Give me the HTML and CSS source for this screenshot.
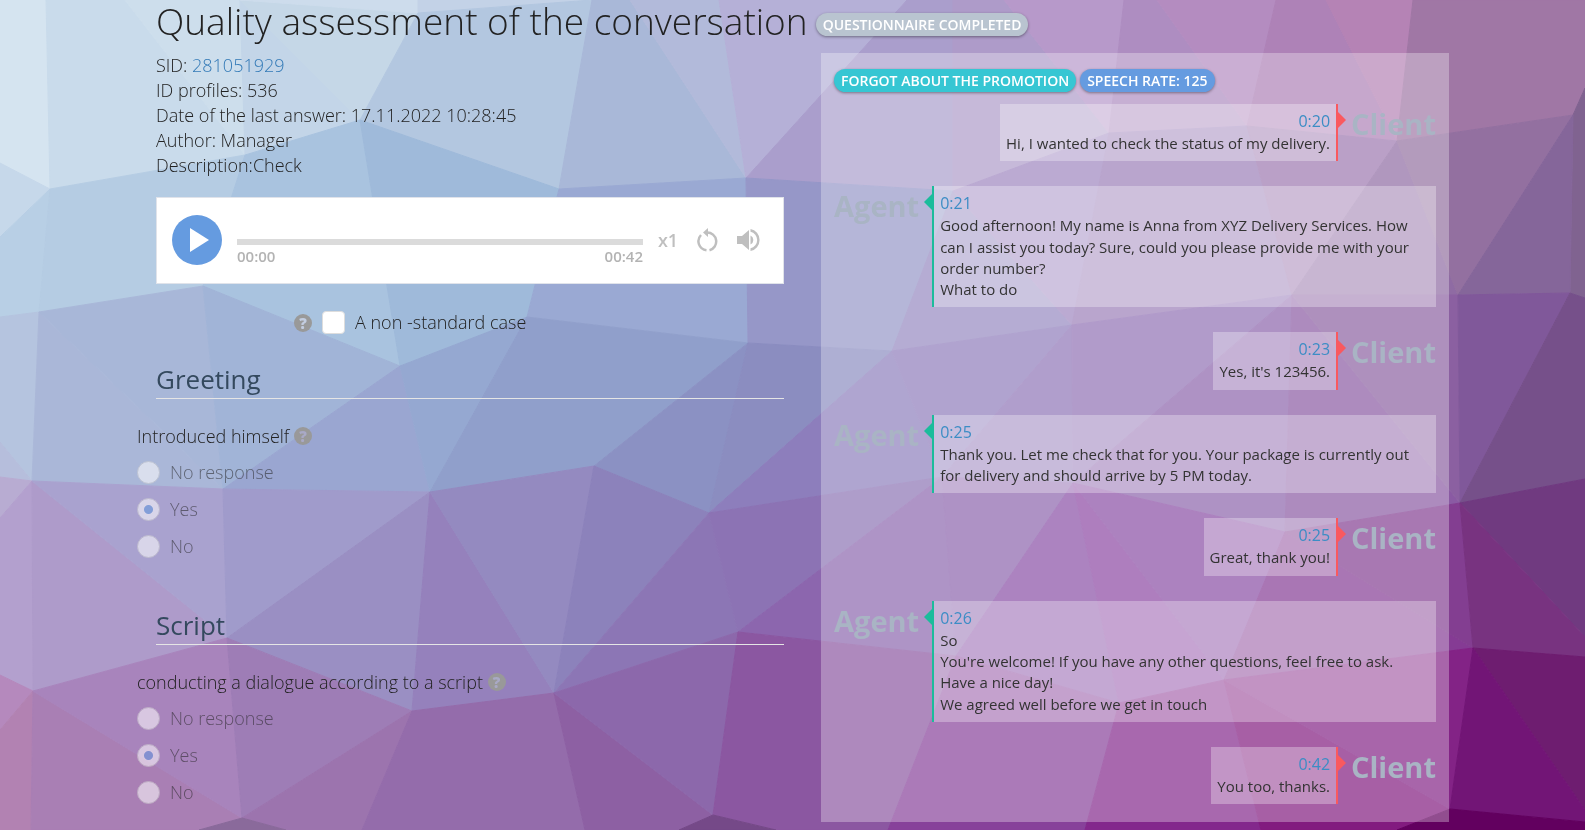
FILE: index.html
```html
<!DOCTYPE html>
<html lang="en">
<head>
    <meta charset="UTF-8">
    <meta name="viewport" content="width=device-width, initial-scale=1.0">
    <title>Quality assessment of the conversation</title>
    <link rel="stylesheet" href="styles.css">
</head>
<body>
    <!-- Low-poly backdrop -->
    <svg class="backdrop" viewBox="0 0 1585 830" preserveAspectRatio="none" aria-hidden="true">
        <polygon color="#d5e4f0" points="0,0 46,0 50,189 0,163"/>
        <polygon color="#c9dbeb" points="46,0 125,0 245,155 50,189"/>
        <polygon color="#cddeec" points="125,0 240,0 245,155"/>
        <polygon color="#c3d5e8" points="240,0 360,120 245,155"/>
        <polygon color="#c5d7e7" points="240,0 418,13 360,120"/>
        <polygon color="#cddcec" points="240,0 418,0 418,13"/>
        <polygon color="#c3d2e7" points="418,0 592,0 418,13"/>
        <polygon color="#b3c7e0" points="418,13 592,0 559,189 360,120"/>
        <polygon color="#a9b8d8" points="592,0 630,0 746,178 559,189"/>
        <polygon color="#b2bada" points="630,0 719,0 746,178"/>
        <polygon color="#b5b0d7" points="719,0 907,0 746,178"/>
        <polygon color="#aa9ecc" points="907,0 953,0 953,191 746,178"/>
        <polygon color="#ae9bc9" points="953,0 1004,0 1109,133 953,191"/>
        <polygon color="#b799ca" points="1004,0 1124,0 1109,133"/>
        <polygon color="#ae8dc1" points="1124,0 1157,0 1247,126 1109,133"/>
        <polygon color="#b48cc0" points="1157,0 1276,0 1247,126"/>
        <polygon color="#ae82b7" points="1276,0 1326,0 1397,141 1247,126"/>
        <polygon color="#b583b5" points="1326,0 1413,0 1397,141"/>
        <polygon color="#a077a5" points="1413,0 1585,0 1585,88 1573,115 1397,141"/>
        <polygon color="#806390" points="1585,88 1585,298 1570,293 1573,115"/>
        <polygon color="#c6d8ea" points="0,163 50,189 0,237"/>
        <polygon color="#b8cfe5" points="0,237 50,189 39,312 0,317"/>
        <polygon color="#b5cce3" points="50,189 245,155 203,286 39,312"/>
        <polygon color="#a9c3df" points="245,155 360,120 400,366 203,286"/>
        <polygon color="#9fbada" points="360,120 559,189 527,317 400,366"/>
        <polygon color="#9aa9d3" points="559,189 746,178 748,343 527,317"/>
        <polygon color="#9697c8" points="746,178 953,191 892,351 748,343"/>
        <polygon color="#9589c0" points="953,191 1072,325 892,351"/>
        <polygon color="#9e86bf" points="953,191 1109,133 1072,325"/>
        <polygon color="#9b7eb8" points="1109,133 1247,126 1292,295 1072,325"/>
        <polygon color="#9d78af" points="1247,126 1397,141 1292,295"/>
        <polygon color="#8f6ba3" points="1397,141 1458,295 1292,295"/>
        <polygon color="#9370a0" points="1397,141 1573,115 1458,295"/>
        <polygon color="#85669a" points="1573,115 1570,293 1458,295"/>
        <polygon color="#b5c4df" points="0,317 39,312 32,481 0,442"/>
        <polygon color="#b6bedc" points="0,442 32,481 0,477"/>
        <polygon color="#aab7d8" points="39,312 223,489 32,481"/>
        <polygon color="#a8b7d8" points="39,312 203,286 223,489"/>
        <polygon color="#a1b4d7" points="203,286 400,366 223,489"/>
        <polygon color="#9aa6d1" points="400,366 430,492 223,489"/>
        <polygon color="#95a8d1" points="400,366 527,317 430,492"/>
        <polygon color="#909fcb" points="527,317 748,343 594,466 430,492"/>
        <polygon color="#8b91c3" points="748,343 709,513 594,466"/>
        <polygon color="#8b8dc0" points="748,343 892,351 709,513"/>
        <polygon color="#8d7ebc" points="892,351 942,477 709,513"/>
        <polygon color="#8f7cbb" points="892,351 1072,325 942,477"/>
        <polygon color="#8f74b6" points="1072,325 1073,483 942,477"/>
        <polygon color="#9070b4" points="1072,325 1292,295 1073,483"/>
        <polygon color="#8c63ab" points="1292,295 1285,532 1073,483"/>
        <polygon color="#8a5aa3" points="1292,295 1460,503 1285,532"/>
        <polygon color="#8b60a1" points="1292,295 1458,295 1460,503"/>
        <polygon color="#80589a" points="1458,295 1570,293 1460,503"/>
        <polygon color="#76508a" points="1570,293 1585,298 1585,479 1460,503"/>
        <polygon color="#b8acd2" points="0,477 32,481 0,518"/>
        <polygon color="#b3a0ce" points="0,518 32,481 33,691 0,675"/>
        <polygon color="#ae9bca" points="32,481 227,638 33,691"/>
        <polygon color="#a9a2cf" points="32,481 223,489 227,638"/>
        <polygon color="#a09bcb" points="223,489 430,492 227,638"/>
        <polygon color="#9a8fc3" points="430,492 412,711 227,638"/>
        <polygon color="#9581bc" points="430,492 554,693 412,711"/>
        <polygon color="#948ac0" points="430,492 594,466 554,693"/>
        <polygon color="#8c82bb" points="594,466 709,513 554,693"/>
        <polygon color="#8c76b5" points="709,513 738,632 554,693"/>
        <polygon color="#8c73b4" points="709,513 942,477 738,632"/>
        <polygon color="#8c66ae" points="942,477 956,656 738,632"/>
        <polygon color="#8b63ac" points="942,477 1073,483 956,656"/>
        <polygon color="#884ea5" points="1073,483 1119,703 956,656"/>
        <polygon color="#8b47a3" points="1073,483 1224,680 1119,703"/>
        <polygon color="#894ca4" points="1073,483 1285,532 1224,680"/>
        <polygon color="#853b94" points="1285,532 1473,648 1224,680"/>
        <polygon color="#833e91" points="1285,532 1460,503 1473,648"/>
        <polygon color="#703a80" points="1460,503 1585,479 1585,637"/>
        <polygon color="#783380" points="1460,503 1585,637 1585,657 1473,648"/>
        <polygon color="#b589bd" points="0,675 33,691 0,730"/>
        <polygon color="#b282b2" points="0,730 33,691 31,830 0,830"/>
        <polygon color="#a97fb4" points="33,691 242,818 199,830 31,830"/>
        <polygon color="#a884bc" points="33,691 227,638 242,818"/>
        <polygon color="#9e7db6" points="227,638 412,711 242,818"/>
        <polygon color="#9c74ae" points="412,711 362,830 286,830 242,818"/>
        <polygon color="#946cab" points="412,711 554,693 585,830 362,830"/>
        <polygon color="#8d60a3" points="554,693 713,815 679,830 585,830"/>
        <polygon color="#8c68ab" points="554,693 738,632 713,815"/>
        <polygon color="#8b57a1" points="738,632 956,656 888,830 776,830 713,815"/>
        <polygon color="#8a6a9b" points="242,818 286,830 199,830"/>
        <polygon color="#754988" points="713,815 776,830 679,830"/>
        <polygon color="#87419a" points="956,656 1119,703 1085,830 888,830"/>
        <polygon color="#83288c" points="1119,703 1224,680 1261,830 1085,830"/>
        <polygon color="#821b7f" points="1224,680 1450,809 1397,830 1261,830"/>
        <polygon color="#832386" points="1224,680 1473,648 1450,809"/>
        <polygon color="#6e1d70" points="1473,648 1585,657 1585,810"/>
        <polygon color="#721576" points="1473,648 1585,810 1585,822 1450,809"/>
        <polygon color="#62005f" points="1450,809 1585,822 1585,830 1397,830"/>
    </svg>

    <div class="page">
        <header class="page-header">
            <h1>Quality assessment of the conversation</h1>
            <span class="badge badge-grey">Questionnaire completed</span>
        </header>

        <div class="columns">
            <main class="survey">
                <div class="info">
                    <div>SID: <a href="#">281051929</a></div>
                    <div>ID profiles: 536</div>
                    <div>Date of the last answer: 17.11.2022 10:28:45</div>
                    <div>Author: Manager</div>
                    <div>Description:Check</div>
                </div>

                <div class="player">
                    <button type="button" class="play" aria-label="Play">
                        <svg width="50" height="50" viewBox="0 0 50 50"><path d="M18 13v24l19-12z" fill="#fff"/></svg>
                    </button>
                    <div class="track">
                        <div class="track-bar"></div>
                        <div class="track-times"><span>00:00</span><span>00:42</span></div>
                    </div>
                    <button type="button" class="player-button speed">x1</button>
                    <button type="button" class="player-button" aria-label="Repeat">
                        <svg width="24" height="26" viewBox="0 0 24 26" fill="none" stroke="#bfbfbf" stroke-width="2.500">
                            <path d="M11 5.500A9 9 0 0 1 13.500 23.200M10.500 23.200A9 9 0 0 1 5 8"/>
                            <path d="M12 1v9L7 5.500z" fill="#bfbfbf" stroke="none"/>
                        </svg>
                    </button>
                    <button type="button" class="player-button" aria-label="Volume">
                        <svg width="24" height="24" viewBox="0 0 24 24" fill="#bfbfbf">
                            <path d="M1 8v8h5l7 6V2L6 8zM14.500 7.500v9a5 5 0 0 0 0-9z"/>
                            <path d="M14.500 1v2.700a8.500 8.500 0 0 1 0 16.600V23a11.200 11.200 0 0 0 0-22z"/>
                        </svg>
                    </button>
                </div>

                <div class="special">
                    <span class="help">?</span>
                    <input type="checkbox" id="special">
                    <label for="special">A non -standard case</label>
                </div>

                <section>
                    <h2>Greeting</h2>
                    <fieldset>
                        <legend>Introduced himself <span class="help">?</span></legend>
                        <label class="option"><input type="radio" name="intro" disabled> No response</label>
                        <label class="option"><input type="radio" name="intro" disabled checked> Yes</label>
                        <label class="option"><input type="radio" name="intro" disabled> No</label>
                    </fieldset>
                </section>

                <section>
                    <h2>Script</h2>
                    <fieldset>
                        <legend>conducting a dialogue according to a script <span class="help">?</span></legend>
                        <label class="option"><input type="radio" name="script" disabled> No response</label>
                        <label class="option"><input type="radio" name="script" disabled checked> Yes</label>
                        <label class="option"><input type="radio" name="script" disabled> No</label>
                    </fieldset>
                </section>
            </main>

            <aside class="dialog">
                <div class="tags">
                    <span class="badge badge-teal">Forgot about the promotion</span>
                    <span class="badge badge-blue">Speech rate: 125</span>
                </div>

                <div class="message client">
                    <div class="who">Client</div>
                    <div class="bubble">
                        <a href="#" class="time">0:20</a>
                        <p>Hi, I wanted to check the status of my delivery.</p>
                    </div>
                </div>
                <div class="message agent">
                    <div class="who">Agent</div>
                    <div class="bubble">
                        <a href="#" class="time">0:21</a>
                        <p>Good afternoon! My name is Anna from XYZ Delivery Services. How can I assist you today? Sure, could you please provide me with your order number?</p>
                        <p>What to do</p>
                    </div>
                </div>
                <div class="message client">
                    <div class="who">Client</div>
                    <div class="bubble">
                        <a href="#" class="time">0:23</a>
                        <p>Yes, it's 123456.</p>
                    </div>
                </div>
                <div class="message agent">
                    <div class="who">Agent</div>
                    <div class="bubble">
                        <a href="#" class="time">0:25</a>
                        <p>Thank you. Let me check that for you. Your package is currently out for delivery and should arrive by 5 PM today.</p>
                    </div>
                </div>
                <div class="message client">
                    <div class="who">Client</div>
                    <div class="bubble">
                        <a href="#" class="time">0:25</a>
                        <p>Great, thank you!</p>
                    </div>
                </div>
                <div class="message agent">
                    <div class="who">Agent</div>
                    <div class="bubble">
                        <a href="#" class="time">0:26</a>
                        <p>So</p>
                        <p>You're welcome! If you have any other questions, feel free to ask. Have a nice day!</p>
                        <p>We agreed well before we get in touch</p>
                    </div>
                </div>
                <div class="message client">
                    <div class="who">Client</div>
                    <div class="bubble">
                        <a href="#" class="time">0:42</a>
                        <p>You too, thanks.</p>
                    </div>
                </div>
            </aside>
        </div>
    </div>
</body>
</html>
```

FILE: styles.css
```css
* {
    box-sizing: border-box;
}
body {
    margin: 0;
    font-family: "Open Sans", sans-serif;
    font-size: 18px;
    font-weight: 300;
    line-height: 25px;
    color: #222;
}
a {
    color: #337ab7;
    text-decoration: none;
}
.backdrop {
    position: fixed;
    top: 0;
    left: 0;
    width: 100%;
    height: 100%;
    z-index: -1;
}
.backdrop polygon {
    fill: currentColor;
    stroke: currentColor;
    stroke-width: 1;
}
.page {
    padding: 0 136px 0 156px;
}
.page-header {
    display: flex;
    align-items: flex-start;
    gap: 8px;
    height: 53px;
    white-space: nowrap;
}
h1 {
    margin: 0;
    font-size: 37px;
    font-weight: 300;
    line-height: 41px;
}
.badge {
    padding: 0 7px;
    border-radius: 12px;
    font-size: 14px;
    font-weight: 600;
    line-height: 23px;
    color: #fff;
    text-transform: uppercase;
    white-space: nowrap;
    box-shadow: 0 1px 3px rgba(0, 0, 0, 0.4);
}
.page-header .badge {
    margin-top: 13px;
}
.badge-grey {
    background-color: #b9c4d0;
}
.badge-teal {
    background-color: #36c6d3;
}
.badge-blue {
    background-color: #659be0;
}
.columns {
    display: grid;
    grid-template-columns: 1fr 1fr;
    gap: 37px;
    align-items: start;
}

/* Player */
.player {
    display: flex;
    align-items: center;
    height: 87px;
    margin-top: 19px;
    padding: 0 15px 2px;
    background-color: #fff;
    border: 1px solid #e0e3ea;
}
.play {
    width: 50px;
    height: 50px;
    padding: 0;
    border: 0;
    border-radius: 50%;
    background-color: #659be0;
    cursor: pointer;
}
.play svg {
    display: block;
}
.track {
    flex: 1;
    margin: 26px 15px 0;
}
.track-bar {
    height: 6px;
    background-color: #dbdbdb;
}
.track-times {
    display: flex;
    justify-content: space-between;
    font-size: 15px;
    font-weight: 600;
    line-height: 22px;
    color: #b3b3b3;
}
.player-button {
    display: flex;
    align-items: center;
    justify-content: center;
    width: 24px;
    margin-right: 16px;
    padding: 0;
    border: 0;
    background: none;
    cursor: pointer;
}
.player-button:last-child {
    margin-right: 8px;
}
.speed {
    width: 20px;
    margin-right: 18px;
    font: 600 18px "Open Sans", sans-serif;
    color: #bfbfbf;
}

/* Questions */
.help {
    display: inline-block;
    width: 18px;
    height: 18px;
    border-radius: 50%;
    background-color: #999;
    color: #c3cde0;
    font-size: 15px;
    font-weight: 800;
    line-height: 18px;
    text-align: center;
    vertical-align: 1px;
}
fieldset .help {
    color: #a9a9c6;
}
.special {
    display: flex;
    align-items: center;
    gap: 10px;
    margin: 26px 0 0 138px;
}
input[type="checkbox"],
input[type="radio"] {
    appearance: none;
    flex: none;
    width: 23px;
    height: 23px;
    margin: 0;
    border: 1px solid #ddd;
    background-color: #fff;
}
input[type="checkbox"] {
    border-radius: 4px;
}
input[type="radio"] {
    border-radius: 50%;
    border-color: #ccc;
}
input[type="radio"]:checked {
    background-image: radial-gradient(circle, #659be0 4px, transparent 5px);
}
h2 {
    margin: 0;
    padding-top: 20px;
    border-bottom: 1px solid #e5e5e5;
    font-size: 26px;
    font-weight: 400;
    line-height: 38px;
    color: #34495e;
}
section {
    height: 246px;
}
.special + section {
    margin-top: 5px;
}
fieldset {
    margin: 0 0 0 -19px;
    padding: 25px 0 0;
    border: 0;
}
legend {
    float: left;
    padding: 0;
    margin-bottom: 11px;
}
.option {
    display: flex;
    clear: both;
    align-items: center;
    gap: 10px;
    height: 25px;
    margin-bottom: 12px;
    opacity: 0.55;
}

/* Conversation */
.dialog {
    padding: 16px 13px 18px;
    background-color: rgba(255, 255, 255, 0.3);
}
.tags {
    display: flex;
    gap: 4px;
    margin-bottom: 12px;
}
.message {
    display: flex;
    align-items: flex-start;
    gap: 13px;
    margin-bottom: 25px;
}
.message:last-child {
    margin-bottom: 0;
}
.client {
    flex-direction: row-reverse;
}
.who {
    font-size: 29px;
    font-weight: 700;
    line-height: 40px;
    color: #a9b4c4;
}
.bubble {
    position: relative;
    padding: 5px 6px 7px;
    font-size: 15px;
    font-weight: 400;
    line-height: 1.42;
    color: #333;
    background-color: rgba(255, 255, 255, 0.3);
}
.bubble p {
    margin: 0;
}
.time {
    display: block;
    font-size: 16px;
    line-height: 24px;
    color: #3c8dc5;
}
.agent .bubble {
    flex: 1;
    border-left: 2px solid #1bbc9b;
}
.client .bubble {
    border-right: 2px solid #f9595f;
    text-align: right;
}
.bubble::after {
    content: "";
    position: absolute;
    top: 8px;
    border: 8px solid transparent;
}
.agent .bubble::after {
    right: 100%;
    margin-right: 2px;
    border-left-width: 0;
    border-right-color: #1bbc9b;
}
.client .bubble::after {
    left: 100%;
    margin-left: 2px;
    border-right-width: 0;
    border-left-color: #f9595f;
}
```
